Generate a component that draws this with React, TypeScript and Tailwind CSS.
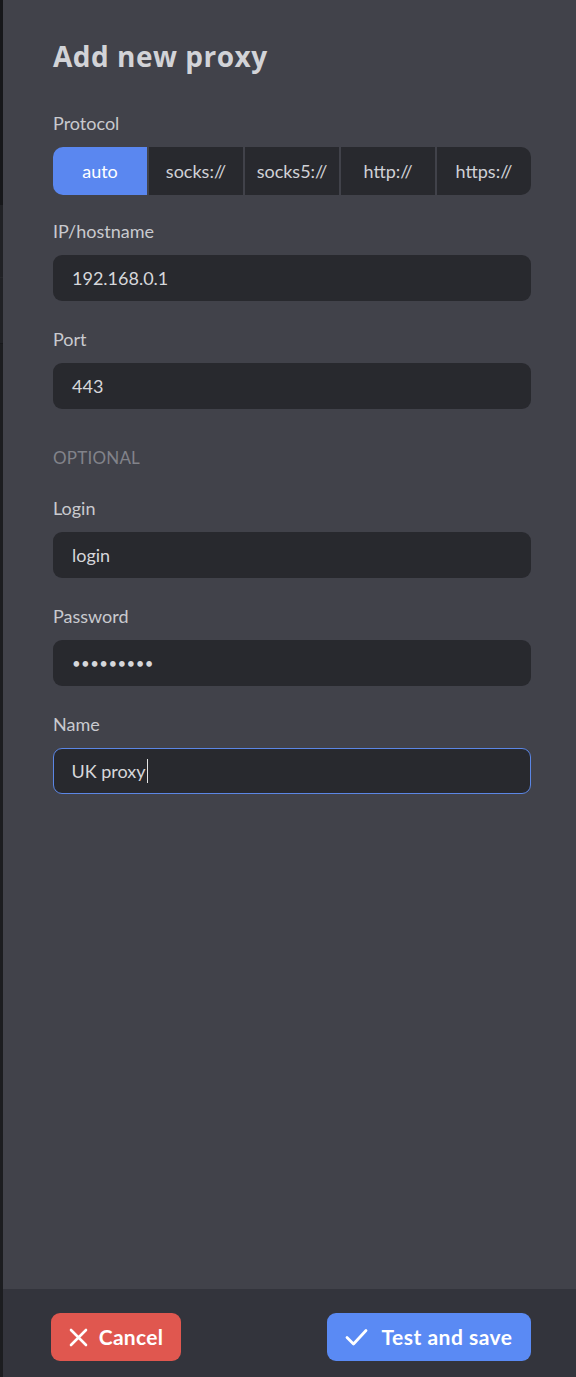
import React from "react";

const font = { fontFamily: "Lato, 'Noto Sans', 'Liberation Sans', sans-serif" };
const titleFont = { fontFamily: "'Open Sans', Lato, 'Liberation Sans', sans-serif" };

function Label({ children }: { children: React.ReactNode }) {
  return <div className="text-[18px] leading-[24px] text-[#c9cacf] mb-3">{children}</div>;
}

function Field({ label, value, className = "" }: { label: string; value: React.ReactNode; className?: string }) {
  return (
    <div className={className}>
      <Label>{label}</Label>
      <div className="h-[46px] rounded-[9px] bg-[#28292e] flex items-center pl-[19px] text-[18px] text-[#d6d7db]">
        {value}
      </div>
    </div>
  );
}

export default function App() {
  const protocols = ["auto", "socks://", "socks5://", "http://", "https://"];
  return (
    <div className="w-[576px] h-[1377px] flex bg-[#41424a]" style={font}>
      <div className="w-[3px] flex flex-col shrink-0">
        <div className="h-[205px] bg-[#16171a]" />
        <div className="h-[73px] bg-[#202125] border-b border-[#26272b]" />
        <div className="h-[66px] bg-[#202125] border-b border-[#17181b]" />
        <div className="flex-1 bg-[#1c1d20]" />
      </div>
      <div className="flex-1 flex flex-col">
        <div className="flex-1 pl-[50px] pr-[45px] pt-[38px]">
          <h1 className="text-[28px] leading-[36px] font-bold text-[#d2d3d7] tracking-[0.5px]" style={titleFont}>
            Add new proxy
          </h1>
          <div className="mt-[37px]">
            <Label>Protocol</Label>
            <div className="flex gap-[2px] h-[48px] rounded-[10px] overflow-hidden">
              {protocols.map((p, i) => (
                <div
                  key={p}
                  className={
                    "flex-1 flex items-center justify-center text-[18px] " +
                    (i === 0 ? "bg-[#5a87f0] text-white" : "bg-[#28292e] text-[#d0d1d6]")
                  }
                >
                  {p}
                </div>
              ))}
            </div>
          </div>
          <Field className="mt-[24px]" label="IP/hostname" value="192.168.0.1" />
          <Field className="mt-[26px]" label="Port" value="443" />
          <div className="mt-[37px] text-[17px] leading-[24px] text-[#82838a] tracking-[0.2px]">OPTIONAL</div>
          <Field className="mt-[26px]" label="Login" value="login" />
          <Field
            className="mt-[26px]"
            label="Password"
            value={<span className="tracking-[0.4px] text-[15px]">•••••••••</span>}
          />
          <div className="mt-[26px]">
            <Label>Name</Label>
            <div className="h-[46px] rounded-[9px] bg-[#28292e] border-[1.5px] border-[#5b86e5] flex items-center pl-[17.5px] text-[18px] text-[#d6d7db]">
              <span>UK proxy</span>
              <span className="inline-block w-[1.5px] h-[24px] bg-[#e5e5e5] ml-[1px]" />
            </div>
          </div>
        </div>
        <div className="h-[88px] bg-[#33343c] flex items-start justify-between pt-[24px] pl-[48px] pr-[45px]">
          <button className="h-[48px] w-[130px] rounded-[9px] bg-[#e0574f] text-white flex items-center justify-center gap-[11px] text-[21px] font-bold tracking-[0.3px]">
            <svg width="19" height="19" viewBox="0 0 19 19" fill="none" stroke="white" strokeWidth="2.6" strokeLinecap="round">
              <path d="M2 2L17 17M17 2L2 17" />
            </svg>
            <span>Cancel</span>
          </button>
          <button className="h-[48px] w-[204px] rounded-[9px] bg-[#5a8af4] text-white flex items-center justify-center gap-[13px] text-[21px] font-bold tracking-[0.5px]">
            <svg width="23" height="18" viewBox="0 0 23 18" fill="none" stroke="white" strokeWidth="2.8" strokeLinecap="round" strokeLinejoin="round">
              <path d="M2 9.5L8.5 16L21 2.5" />
            </svg>
            <span>Test and save</span>
          </button>
        </div>
      </div>
    </div>
  );
}
